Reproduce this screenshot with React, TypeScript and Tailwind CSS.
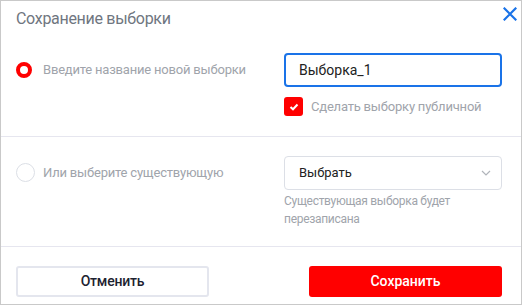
import React from "react";

export default function App() {
  return (
    <div
      className="w-[522px] h-[305px] bg-white border border-[#c9c9c9] flex flex-col"
      style={{ fontFamily: "Roboto, 'Liberation Sans', sans-serif" }}
    >
      <div className="relative h-[36px] pl-[15px] pt-[7px]">
        <div className="text-[16px] tracking-[-0.3px] text-[#6f7680] leading-[22px]">Сохранение выборки</div>
        <svg className="absolute right-[4px] top-[6px]" width="14" height="14" viewBox="0 0 14 14">
          <path d="M1.5 1.5 L12.5 12.5 M12.5 1.5 L1.5 12.5" stroke="#1a73e8" strokeWidth="2.2" strokeLinecap="square" />
        </svg>
      </div>
      <div className="h-[100px] flex pl-[15px] pt-[16px] border-b border-[#e6e6ef]">
        <div className="w-[268px] flex items-start pt-[9px]">
          <div className="w-[16px] h-[16px] rounded-full border-[4px] border-[#ff0000] box-border"></div>
          <div className="ml-[11px] text-[13px] tracking-[-0.2px] leading-[16px] text-[#a0a4ab]">Введите название новой выборки</div>
        </div>
        <div className="flex flex-col">
          <div className="w-[218px] h-[34px] border-2 border-[#1a73e8] rounded-[4px] flex items-center pl-[13px] text-[14px] text-[#222]">
            Выборка_1
          </div>
          <div className="flex items-center mt-[10px]">
            <div className="w-[19px] h-[19px] rounded-[3px] bg-[#ff0000] flex items-center justify-center">
              <svg width="10" height="8" viewBox="0 0 10 8">
                <path d="M1.5 4 L4 6.3 L8.5 1.5" stroke="white" strokeWidth="2" fill="none" />
              </svg>
            </div>
            <div className="ml-[8px] text-[13px] tracking-[-0.2px] text-[#a0a4ab]">Сделать выборку публичной</div>
          </div>
        </div>
      </div>
      <div className="h-[110px] flex pl-[15px] pt-[19px] border-b border-[#e6e6ef]">
        <div className="w-[268px] flex items-start pt-[7px]">
          <div className="w-[19px] h-[19px] rounded-full border-[1.5px] border-[#dcdfe6] box-border"></div>
          <div className="ml-[8px] text-[13px] tracking-[-0.2px] leading-[19px] text-[#a0a4ab]">Или выберите существующую</div>
        </div>
        <div className="flex flex-col">
          <div className="w-[218px] h-[34px] border border-[#dcdfe6] rounded-[4px] flex items-center justify-between pl-[14px] pr-[10px] text-[13px] text-[#222]">
            <span>Выбрать</span>
            <svg width="10" height="6" viewBox="0 0 10 6">
              <path d="M1 1 L5 5 L9 1" stroke="#b0b4ba" strokeWidth="1.2" fill="none" />
            </svg>
          </div>
          <div className="mt-[2px] text-[12px] tracking-[-0.3px] leading-[18px] text-[#a0a4ab] w-[200px]">
            Существующая выборка будет перезаписана
          </div>
        </div>
      </div>
      <div className="flex-1 flex items-start pt-[19px] pl-[15px] pr-[19px] justify-between">
        <button className="w-[193px] h-[31px] border-2 border-[#e4e6ee] rounded-[3px] text-[14px] tracking-[-0.2px] font-medium text-[#1c2230] bg-white">
          Отменить
        </button>
        <button className="w-[193px] h-[31px] rounded-[3px] bg-[#ff0000] text-[14px] font-medium text-white">
          Сохранить
        </button>
      </div>
    </div>
  );
}
